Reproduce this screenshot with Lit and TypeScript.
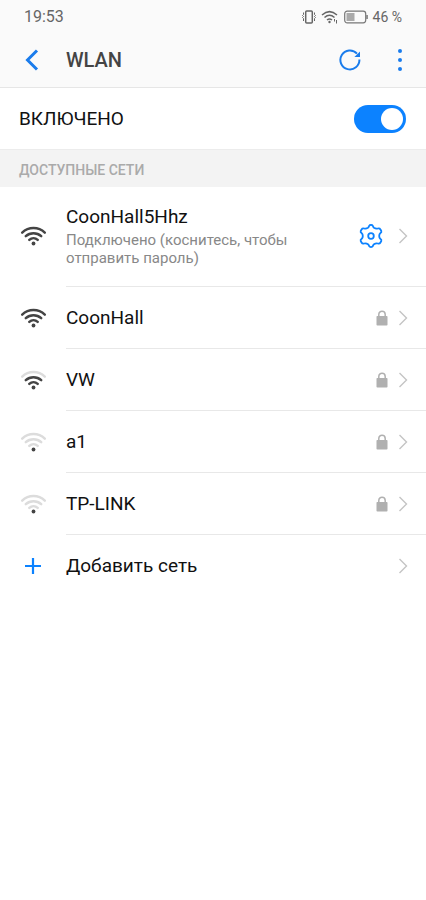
import { LitElement, html, css, svg, nothing } from "lit";
import { customElement, property, state } from "lit/decorators.js";

interface Network {
  name: string;
  level: number;
  secured: boolean;
  note?: string;
}

const NETWORKS: Network[] = [
  { name: "CoonHall5Hhz", level: 3, secured: false, note: "Подключено (коснитесь, чтобы отправить пароль)" },
  { name: "CoonHall", level: 3, secured: true },
  { name: "VW", level: 2, secured: true },
  { name: "a1", level: 0, secured: true },
  { name: "TP-LINK", level: 0, secured: true },
];

@customElement("wifi-signal")
class WifiSignal extends LitElement {
  @property({ type: Number }) level = 0;

  static styles = css`
    :host { display: block; }
    svg { display: block; }
    .arc { fill: none; stroke-width: 2.5; stroke-linecap: round; stroke: #dcdcdc; }
    .arc.on { stroke: #444; }
    .dot { fill: #444; }
  `;

  render() {
    const arcs = [
      "M9.3 13.800A6.200 6.200 0 0 1 17.700 13.800",
      "M5.800 10.200A11.400 11.400 0 0 1 21.200 10.200",
      "M2.200 6.600A16.500 16.500 0 0 1 24.800 6.600",
    ];
    return html`<svg width="27" height="21" viewBox="0 0 27 21" aria-hidden="true">
      ${arcs.map((d, i) => svg`<path class="arc ${this.level > i ? "on" : ""}" d=${d} />`)}
      <circle class="dot" cx="13.500" cy="17.500" r="1.900" />
    </svg>`;
  }
}

@customElement("app-root")
class AppRoot extends LitElement {
  @state() private enabled = true;

  static styles = css`
    :host {
      display: block;
      min-height: 100vh;
      background: #fff;
      color: #111;
      font-family: Roboto, "Noto Sans", sans-serif;
      font-size: 19px;
      line-height: 24px;
    }
    svg { display: block; flex: none; }
    button {
      border: 0;
      padding: 0;
      background: none;
      font: inherit;
      color: inherit;
      text-align: left;
      cursor: pointer;
    }
    .top { background: #fafafa; border-bottom: 1px solid #e6e6e6; }
    .status {
      display: flex;
      align-items: center;
      height: 33px;
      padding: 0 24px;
      font-size: 16px;
      color: #666;
    }
    .status-icons { display: flex; align-items: center; gap: 5px; margin-left: auto; font-size: 14px; }
    .bar { display: flex; align-items: center; height: 54px; padding: 0 20px 0 24px; color: #1a7cec; }
    .bar h1 {
      flex: 1;
      margin: 0 0 0 24px;
      font-size: 20px;
      font-weight: 500;
      color: #444;
    }
    .more { margin-left: 33px; }
    .toggle { display: flex; align-items: center; height: 61px; padding: 0 20px 0 19px; }
    .toggle label { flex: 1; }
    .switch {
      appearance: none;
      flex: none;
      width: 52px;
      height: 28px;
      margin: 0;
      padding: 3px;
      border-radius: 14px;
      background: #bbb;
      cursor: pointer;
    }
    .switch::before {
      content: "";
      display: block;
      width: 22px;
      height: 22px;
      border-radius: 50%;
      background: #fff;
    }
    .switch:checked { background: #0c82ff; }
    .switch:checked::before { margin-left: auto; }
    .section {
      margin: 0;
      padding: 8px 19px 5px;
      background: #f3f3f3;
      border-top: 1px solid #ececec;
      color: #aaa;
      font-size: 14px;
      font-weight: 500;
      line-height: 24px;
    }
    ul { list-style: none; margin: 0; padding: 0; }
    .row { display: flex; align-items: stretch; padding-left: 20px; }
    .lead { display: flex; align-items: center; width: 46px; flex: none; }
    .body {
      flex: 1;
      min-width: 0;
      display: flex;
      align-items: center;
      min-height: 61px;
      padding-right: 18px;
      border-bottom: 1px solid #e8e8e8;
    }
    .tall .lead { padding-bottom: 2px; }
    .tall .body { min-height: 97px; padding-bottom: 2px; }
    .row:last-child .body { border-bottom: 0; }
    .name { flex: 1; min-width: 0; align-self: stretch; }
    .title, .note { display: block; }
    .note { max-width: 250px; margin-top: 2px; color: #888; font-size: 15px; line-height: 18px; }
    .gear { margin-right: 15px; color: #0c82ff; }
    .lock { margin-right: 10px; }
  `;

  private chevron() {
    return html`<svg width="10" height="16" viewBox="0 0 10 16" fill="none" stroke="#c4c4c4" stroke-width="1.4" aria-hidden="true">
      <path d="M1.500 1L8.500 8L1.500 15" />
    </svg>`;
  }

  private networkRow(n: Network) {
    return html`<li class="row ${n.note ? "tall" : ""}">
      <span class="lead"><wifi-signal .level=${n.level}></wifi-signal></span>
      <div class="body">
        <button class="name">
          <span class="title">${n.name}</span>
          ${n.note ? html`<span class="note">${n.note}</span>` : nothing}
        </button>
        ${n.note
          ? html`<button class="gear" aria-label="Настройки сети">
              <svg width="24" height="26" viewBox="0 0 24 26" fill="none" stroke="currentColor" stroke-width="1.8" stroke-linejoin="round">
                <path d="M9 4.800Q9.800 4.200 10.200 2.800Q10.600 1.900 12 1.900T13.800 2.800Q14.200 4.200 15 4.800Q16.800 6 18.800 5.500Q20.600 5 21.300 6.300L22.300 8Q22.800 9.200 21.300 10.200Q20.200 11.300 20.200 13T21.300 15.800Q22.800 16.800 22.300 18L21.300 19.700Q20.600 21 18.800 20.500Q16.800 20 15 21.200Q14.200 21.800 13.800 23.200Q13.400 24.100 12 24.100T10.200 23.200Q9.800 21.800 9 21.200Q7.200 20 5.200 20.500Q3.400 21 2.700 19.700L1.700 18Q1.200 16.800 2.700 15.800Q3.800 14.700 3.800 13T2.700 10.200Q1.200 9.200 1.700 8L2.700 6.300Q3.400 5 5.200 5.500Q7.200 6 9 4.800Z" />
                <circle cx="12" cy="13" r="2.800" />
              </svg>
            </button>`
          : nothing}
        ${n.secured
          ? html`<svg class="lock" width="12" height="16" viewBox="0 0 12 16" aria-hidden="true">
              <path d="M2.800 7V4.400a3.200 3.200 0 0 1 6.400 0V7" fill="none" stroke="#b0b0b0" stroke-width="1.500" />
              <rect x=".5" y="6" width="11" height="9.500" rx=".8" fill="#b0b0b0" />
            </svg>`
          : nothing}
        ${this.chevron()}
      </div>
    </li>`;
  }

  render() {
    return html`
      <header class="top">
        <div class="status">
          <span>19:53</span>
          <div class="status-icons">
            <svg width="14" height="14" viewBox="0 0 14 14" fill="none" stroke="#666" aria-hidden="true">
              <rect x="3.700" y="1" width="6.600" height="12" rx="1" stroke-width="1.500" />
              <path d="M1.500 2.500v2l-1 1 1 1-1 1 1 1v2.500M12.500 2.500v2l1 1-1 1 1 1-1 1v2.500" />
            </svg>
            <svg width="18" height="14" viewBox="0 0 18 14" fill="none" stroke="#666" stroke-width="1.500" aria-hidden="true">
              <path d="M1 5Q8.500 -1.800 16 5M3.500 7.500Q8.500 3 13.500 7.500M6 10Q8.500 8 11 10" />
              <circle cx="8.500" cy="12" r="1.200" fill="#666" stroke="none" />
              <path d="M13.500 9v2.500M15.500 10v3.500" stroke-width="1" />
            </svg>
            <svg width="24" height="14" viewBox="0 0 24 14" aria-hidden="true">
              <rect x=".7" y="1.200" width="21" height="11.600" rx="2.500" fill="none" stroke="#777" stroke-width="1.200" />
              <rect x="2.500" y="3" width="8" height="8" fill="#aaa" />
              <rect x="22.300" y="5" width="1.500" height="4" fill="#777" />
            </svg>
            <span>46 %</span>
          </div>
        </div>
        <nav class="bar">
          <button aria-label="Назад">
            <svg width="18" height="22" viewBox="0 0 18 22" fill="none" stroke="currentColor" stroke-width="3">
              <path d="M13 1.500L3.500 11L13 20.500" />
            </svg>
          </button>
          <h1>WLAN</h1>
          <button aria-label="Обновить">
            <svg width="22" height="22" viewBox="0 0 22 22" fill="none" stroke="currentColor" stroke-width="2">
              <path d="M20.400 10.500A9.500 9.500 0 1 1 18 4.600" />
              <path d="M21 2.500V8H15.400Z" fill="currentColor" stroke="none" />
            </svg>
          </button>
          <button class="more" aria-label="Ещё">
            <svg width="12" height="24" viewBox="0 0 12 24" fill="currentColor">
              <circle cx="6" cy="3" r="2" />
              <circle cx="6" cy="12" r="2" />
              <circle cx="6" cy="21" r="2" />
            </svg>
          </button>
        </nav>
      </header>
      <main>
        <div class="toggle">
          <label for="wlan">ВКЛЮЧЕНО</label>
          <input
            id="wlan"
            class="switch"
            type="checkbox"
            role="switch"
            .checked=${this.enabled}
            @change=${(e: Event) => (this.enabled = (e.target as HTMLInputElement).checked)}
          />
        </div>
        <h2 class="section">ДОСТУПНЫЕ СЕТИ</h2>
        <ul>
          ${NETWORKS.map((n) => this.networkRow(n))}
          <li class="row">
            <span class="lead">
              <svg width="26" height="18" viewBox="0 0 26 18" stroke="#0c82ff" stroke-width="2.200" aria-hidden="true">
                <path d="M13 1V17M5 9H21" />
              </svg>
            </span>
            <div class="body">
              <button class="name">Добавить сеть</button>
              ${this.chevron()}
            </div>
          </li>
        </ul>
      </main>
    `;
  }
}
